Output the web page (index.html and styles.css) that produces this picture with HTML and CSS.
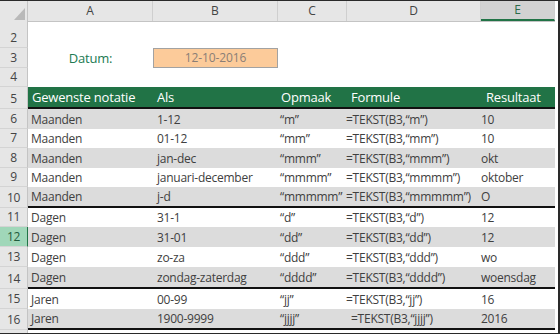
FILE: index.html
```html
<!DOCTYPE html>
<html lang="nl">
<head>
<meta charset="utf-8">
<link rel="stylesheet" href="styles.css">
</head>
<body>
<div class="sheet">
  <div class="row colhead">
    <div class="corner"><span class="tri"></span></div>
    <div class="cells">
      <div class="ch">A</div>
      <div class="ch">B</div>
      <div class="ch">C</div>
      <div class="ch">D</div>
      <div class="ch sel">E</div>
    </div>
    <div class="fill"></div>
  </div>

  <div class="row r2">
    <div class="num">2</div>
    <div class="cells"></div>
    <div class="fill"></div>
  </div>

  <div class="row r3">
    <div class="num">3</div>
    <div class="cells">
      <div class="c datum">Datum:</div>
      <div class="c date">12-10-2016</div>
    </div>
    <div class="fill"></div>
  </div>

  <div class="row r4">
    <div class="num">4</div>
    <div class="cells"></div>
    <div class="fill"></div>
  </div>

  <div class="row r5">
    <div class="num">5</div>
    <div class="cells head thick">
      <div class="c a">Gewenste notatie</div>
      <div class="c b">Als</div>
      <div class="c cc">Opmaak</div>
      <div class="c d">Formule</div>
      <div class="c e">Resultaat</div>
    </div>
    <div class="fill"></div>
  </div>

  <div class="row h20">
    <div class="num">6</div>
    <div class="cells gray">
      <div class="c a">Maanden</div><div class="c b">1-12</div><div class="c cc">“m”</div><div class="c d">=TEKST(B3,“m”)</div><div class="c e">10</div>
    </div>
    <div class="fill"></div>
  </div>
  <div class="row h19">
    <div class="num">7</div>
    <div class="cells">
      <div class="c a">Maanden</div><div class="c b">01-12</div><div class="c cc">“mm”</div><div class="c d">=TEKST(B3,“mm”)</div><div class="c e">10</div>
    </div>
    <div class="fill"></div>
  </div>
  <div class="row h20">
    <div class="num">8</div>
    <div class="cells gray">
      <div class="c a">Maanden</div><div class="c b">jan-dec</div><div class="c cc">“mmm”</div><div class="c d">=TEKST(B3,“mmm”)</div><div class="c e">okt</div>
    </div>
    <div class="fill"></div>
  </div>
  <div class="row h19">
    <div class="num">9</div>
    <div class="cells">
      <div class="c a">Maanden</div><div class="c b">januari-december</div><div class="c cc">“mmmm”</div><div class="c d">=TEKST(B3,“mmmm”)</div><div class="c e">oktober</div>
    </div>
    <div class="fill"></div>
  </div>
  <div class="row h19">
    <div class="num">10</div>
    <div class="cells gray thick">
      <div class="c a">Maanden</div><div class="c b">j-d</div><div class="c cc">“mmmmm”</div><div class="c d">=TEKST(B3,“mmmmm”)</div><div class="c e">O</div>
    </div>
    <div class="fill"></div>
  </div>

  <div class="row h19">
    <div class="num">11</div>
    <div class="cells">
      <div class="c a">Dagen</div><div class="c b">31-1</div><div class="c cc">“d”</div><div class="c d">=TEKST(B3,“d”)</div><div class="c e">12</div>
    </div>
    <div class="fill"></div>
  </div>
  <div class="row h20">
    <div class="num active">12</div>
    <div class="cells gray">
      <div class="c a">Dagen</div><div class="c b">31-01</div><div class="c cc">“dd”</div><div class="c d">=TEKST(B3,“dd”)</div><div class="c e">12</div>
    </div>
    <div class="fill"></div>
  </div>
  <div class="row h20">
    <div class="num">13</div>
    <div class="cells">
      <div class="c a">Dagen</div><div class="c b">zo-za</div><div class="c cc">“ddd”</div><div class="c d">=TEKST(B3,“ddd”)</div><div class="c e">wo</div>
    </div>
    <div class="fill"></div>
  </div>
  <div class="row h20">
    <div class="num">14</div>
    <div class="cells gray thick">
      <div class="c a">Dagen</div><div class="c b">zondag-zaterdag</div><div class="c cc">“dddd”</div><div class="c d">=TEKST(B3,“dddd”)</div><div class="c e">woensdag</div>
    </div>
    <div class="fill"></div>
  </div>

  <div class="row h20">
    <div class="num">15</div>
    <div class="cells">
      <div class="c a">Jaren</div><div class="c b">00-99</div><div class="c cc">“jj”</div><div class="c d">=TEKST(B3,“jj”)</div><div class="c e">16</div>
    </div>
    <div class="fill"></div>
  </div>
  <div class="row h19">
    <div class="num">16</div>
    <div class="cells gray thick">
      <div class="c a">Jaren</div><div class="c b">1900-9999</div><div class="c cc">“jjjj”</div><div class="c d dshift">=TEKST(B3,“jjjj”)</div><div class="c e">2016</div>
    </div>
    <div class="fill"></div>
  </div>

  <div class="row r17">
    <div class="num"></div>
    <div class="cells"></div>
    <div class="fill"></div>
  </div>
</div>
</body>
</html>
```

FILE: styles.css
```css
* { box-sizing: border-box; }

html, body {
  margin: 0;
  padding: 0;
  background: #ffffff;
}

.sheet {
  width: 560px;
  height: 334px;
  overflow: hidden;
  border-top: 1px solid #2a2a2a;
  border-right: 2px solid #2a2a2a;
  border-bottom: 1px solid #2a2a2a;
  font-family: "Open Sans", "Noto Sans", sans-serif;
  color: #404040;
  background: #ffffff;
}

.row {
  display: grid;
  grid-template-columns: 28px 527px 1fr;
}

.cells {
  display: grid;
  grid-template-columns: 125px 125px 69px 134px 74px;
  align-items: end;
}

.fill { background: #ffffff; }

/* column header */
.colhead { height: 20px; }
.colhead .cells { align-items: stretch; border-bottom: 1px solid #c4c4c4; }
.corner {
  background: #e6e6e6;
  border-right: 1px solid #c4c4c4;
  border-bottom: 1px solid #c4c4c4;
  display: flex;
  justify-content: flex-end;
  align-items: flex-end;
  padding: 0 2px 1px 0;
}
.tri {
  width: 0;
  height: 0;
  border-left: 11px solid transparent;
  border-bottom: 12px solid #b9b9b9;
}
.ch {
  background: #e6e6e6;
  border-right: 1px solid #cfcfcf;
  font-size: 12px;
  color: #444444;
  text-align: center;
  line-height: 19px;
}
.ch.sel {
  background: #d2d2d2;
  color: #2b6b4a;
  border-bottom: 2px solid #217346;
  line-height: 18px;
}
.colhead .fill { border-bottom: 1px solid #c4c4c4; }

/* row numbers */
.num {
  background: #e6e6e6;
  border-right: 1px solid #c4c4c4;
  border-bottom: 1px solid #d4d4d4;
  font-size: 12px;
  letter-spacing: -0.3px;
  color: #444444;
  text-align: center;
  display: flex;
  align-items: flex-end;
  justify-content: center;
  padding-bottom: 1px;
  line-height: 17px;
}
.num.active {
  background: #a0d7b9;
  color: #1f5b3c;
  border-right: 1px solid #217346;
}

.r2 { height: 27px; }
.r3 { height: 20px; }
.r4 { height: 19px; }
.r5 { height: 22px; }
.h20 { height: 20px; }
.h19 { height: 19px; }
.r17 { height: 10px; }

.cells.thick { border-bottom: 2px solid #111111; }
.row.h20:has(.thick) { height: 22px; }
.row.h19:has(.thick) { height: 21px; }

.gray { background: #dcdcdc; }

.c {
  white-space: nowrap;
  font-size: 12px;
  letter-spacing: -0.25px;
  line-height: 17px;
  padding-bottom: 1px;
  overflow: visible;
}
.c.a { padding-left: 3px; }
.c.b { padding-left: 4px; }
.c.cc { padding-left: 2px; }
.c.d { margin-left: -1px; }
.c.d.dshift { margin-left: 0; padding-left: 4px; }
.c.e { padding-left: 0; }

.head {
  background: #217346;
  align-items: center;
}
.head .c {
  color: #ffffff;
  font-size: 13px;
  letter-spacing: -0.2px;
  line-height: 20px;
  padding-bottom: 0;
}
.head .c.a { padding-left: 4px; }
.head .c.cc { padding-left: 3px; }
.head .c.d { margin-left: 0; padding-left: 4px; }
.head .c.e { padding-left: 5px; }

.datum {
  color: #217a52;
  font-size: 13px;
  letter-spacing: -0.2px;
  text-align: center;
  line-height: 18px;
}
.date {
  background: #fccb9a;
  border: 1px solid #a2a2a2;
  height: 20px;
  color: #8a7e76;
  text-align: center;
  font-size: 12px;
  letter-spacing: -0.1px;
  line-height: 18px;
  padding-bottom: 0;
}
```
